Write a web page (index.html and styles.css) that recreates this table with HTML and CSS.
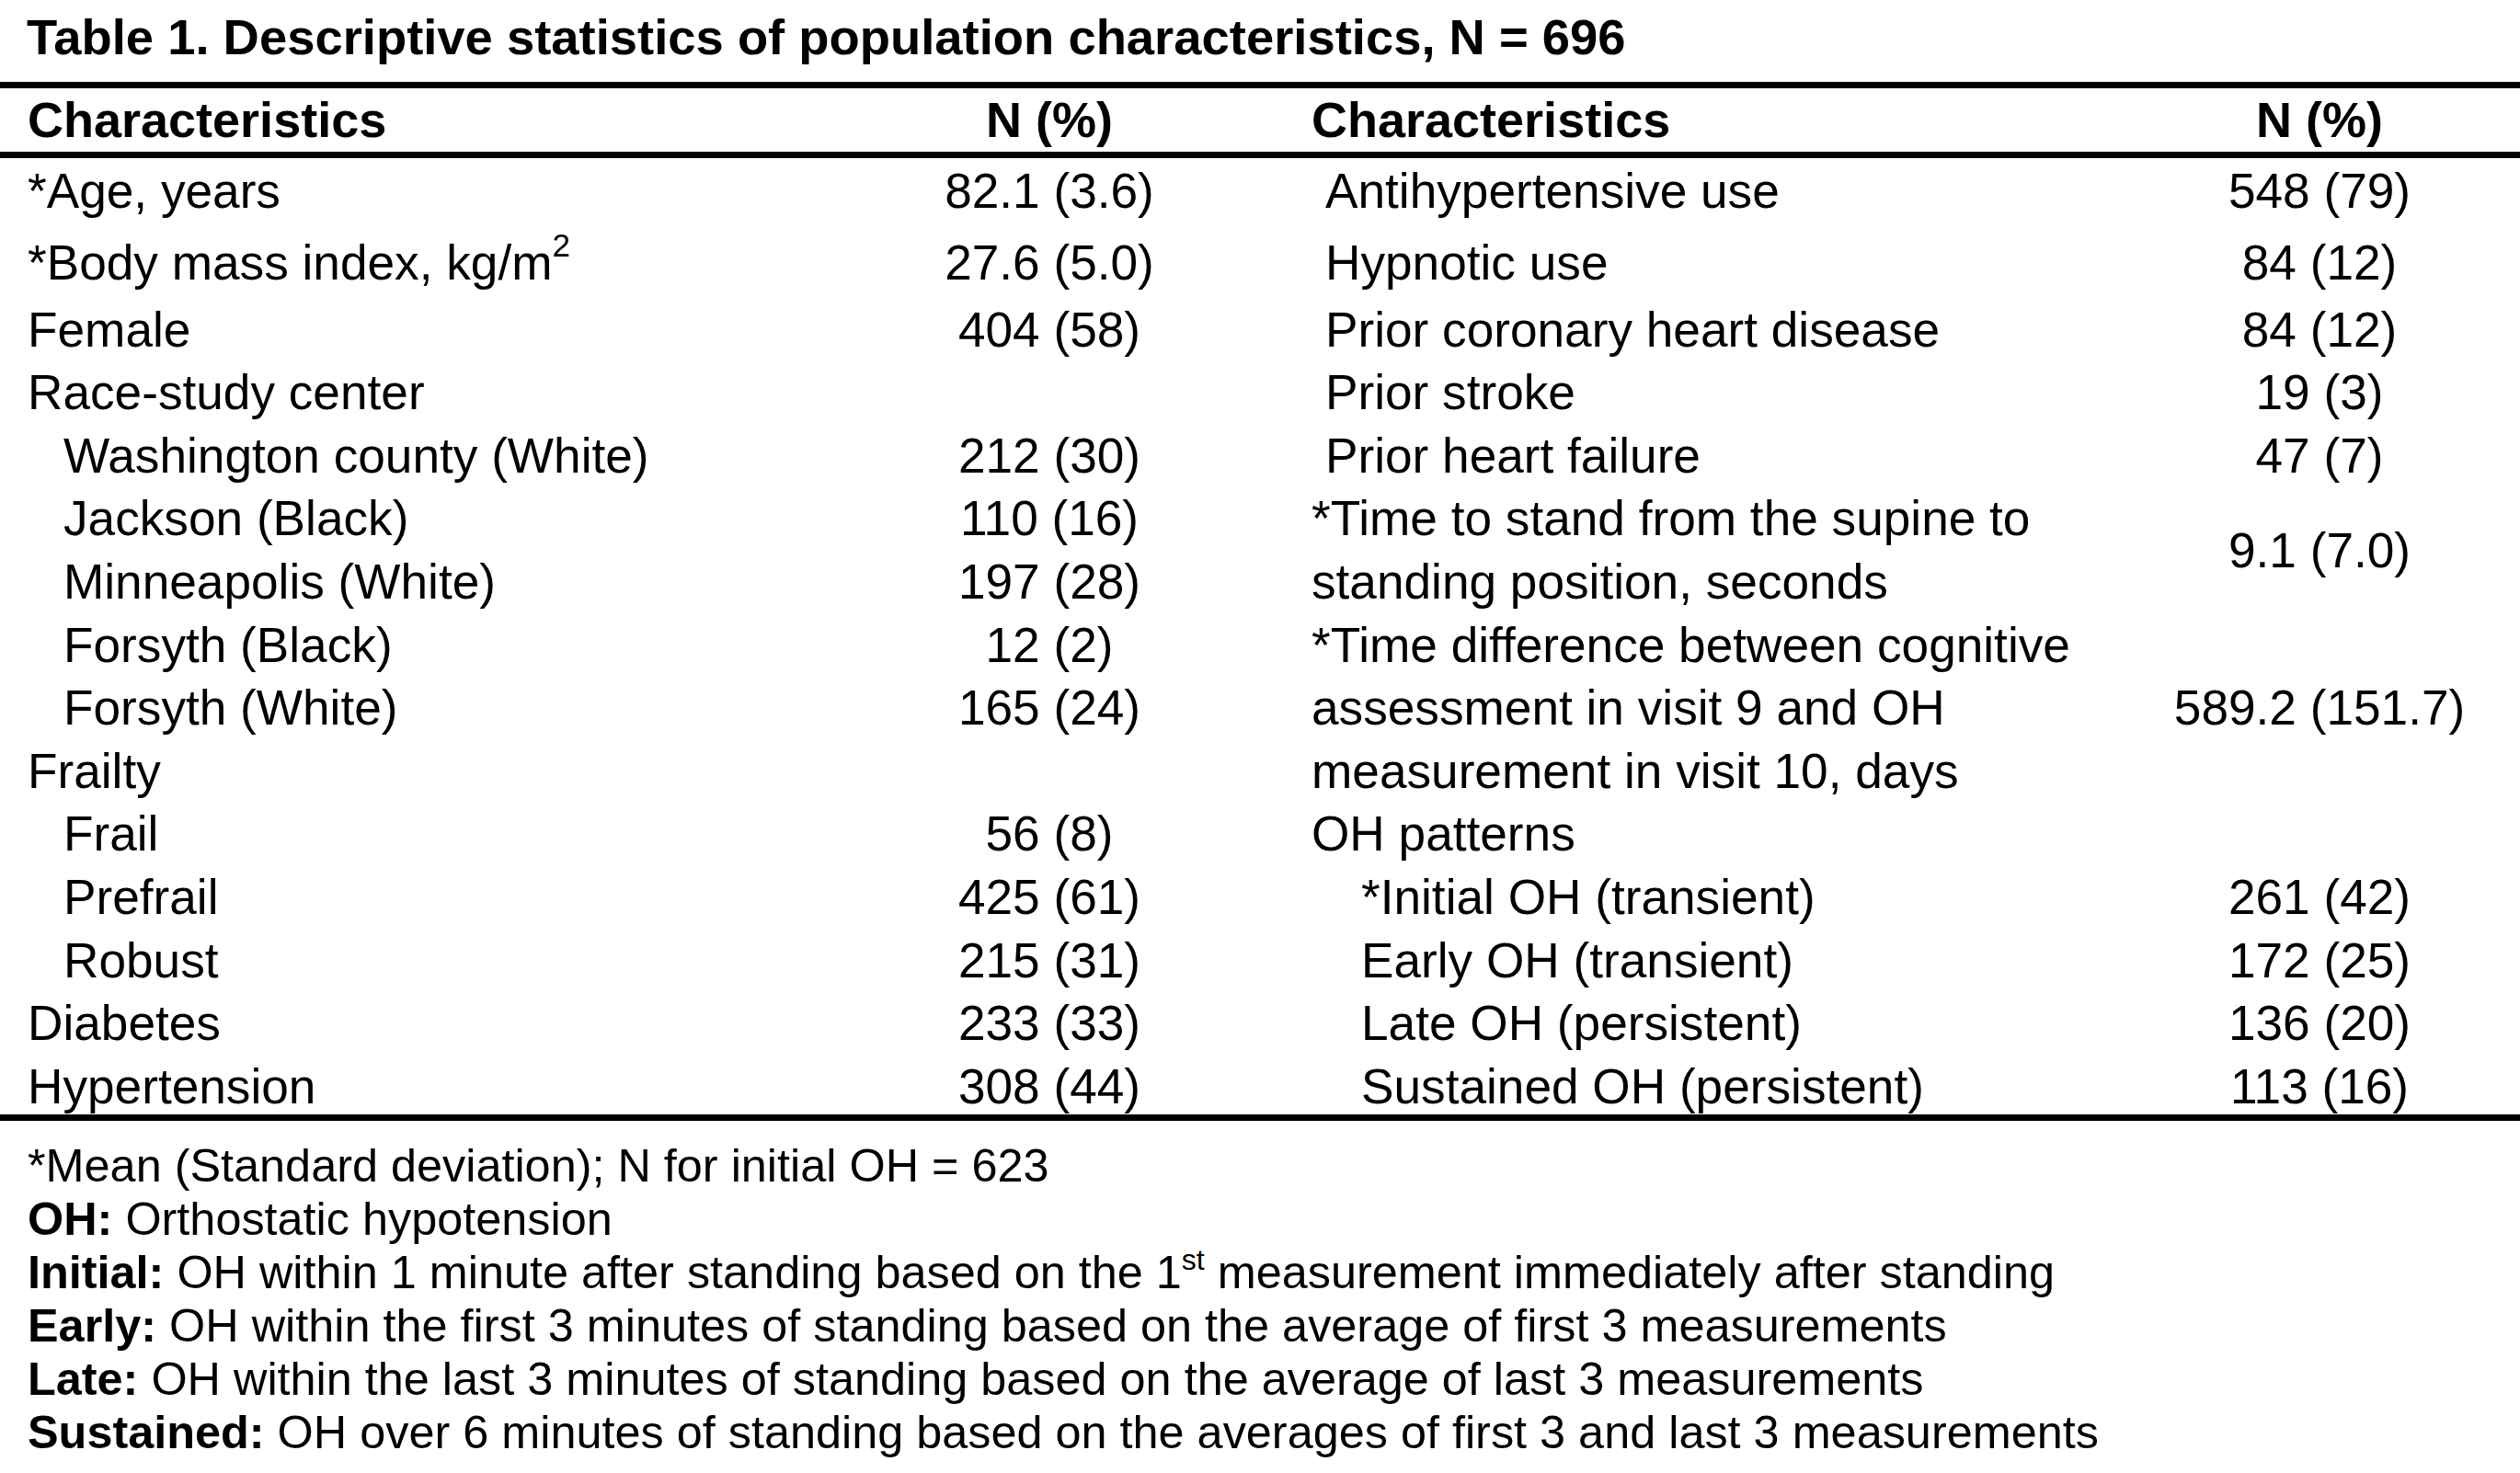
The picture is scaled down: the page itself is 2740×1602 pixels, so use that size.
FILE: index.html
```html
<!DOCTYPE html>
<html lang="en">
<head>
<meta charset="utf-8">
<title>Table 1</title>
<link rel="stylesheet" href="styles.css">
</head>
<body>
<div class="title">Table 1. Descriptive statistics of population characteristics, N = 696</div>
<table class="stats">
  <colgroup>
    <col class="w1"><col class="w2"><col class="w3"><col class="w4">
  </colgroup>
  <thead>
    <tr>
      <th class="c1">Characteristics</th>
      <th class="num">N (%)</th>
      <th class="c3">Characteristics</th>
      <th class="num">N (%)</th>
    </tr>
  </thead>
  <tbody>
    <tr class="first">
      <td class="c1">*Age, years</td><td class="num">82.1 (3.6)</td>
      <td class="c3i">Antihypertensive use</td><td class="num">548 (79)</td>
    </tr>
    <tr class="tall">
      <td class="c1">*Body mass index, kg/m<span class="sup2">2</span></td><td class="num">27.6 (5.0)</td>
      <td class="c3i">Hypnotic use</td><td class="num">84 (12)</td>
    </tr>
    <tr>
      <td class="c1">Female</td><td class="num">404 (58)</td>
      <td class="c3i">Prior coronary heart disease</td><td class="num">84 (12)</td>
    </tr>
    <tr>
      <td class="c1">Race-study center</td><td class="num"></td>
      <td class="c3i">Prior stroke</td><td class="num">19 (3)</td>
    </tr>
    <tr>
      <td class="sub">Washington county (White)</td><td class="num">212 (30)</td>
      <td class="c3i">Prior heart failure</td><td class="num">47 (7)</td>
    </tr>
    <tr>
      <td class="sub">Jackson (Black)</td><td class="num">110 (16)</td>
      <td class="c3" rowspan="2">*Time to stand from the supine to<br>standing position, seconds</td>
      <td class="num" rowspan="2">9.1 (7.0)</td>
    </tr>
    <tr>
      <td class="sub">Minneapolis (White)</td><td class="num">197 (28)</td>
    </tr>
    <tr>
      <td class="sub">Forsyth (Black)</td><td class="num">12 (2)</td>
      <td class="c3" rowspan="3">*Time difference between cognitive<br>assessment in visit 9 and OH<br>measurement in visit 10, days</td>
      <td class="num" rowspan="3">589.2 (151.7)</td>
    </tr>
    <tr>
      <td class="sub">Forsyth (White)</td><td class="num">165 (24)</td>
    </tr>
    <tr>
      <td class="c1">Frailty</td><td class="num"></td>
    </tr>
    <tr>
      <td class="sub">Frail</td><td class="num">56 (8)</td>
      <td class="c3">OH patterns</td><td class="num"></td>
    </tr>
    <tr>
      <td class="sub">Prefrail</td><td class="num">425 (61)</td>
      <td class="c3s">*Initial OH (transient)</td><td class="num">261 (42)</td>
    </tr>
    <tr>
      <td class="sub">Robust</td><td class="num">215 (31)</td>
      <td class="c3s">Early OH (transient)</td><td class="num">172 (25)</td>
    </tr>
    <tr>
      <td class="c1">Diabetes</td><td class="num">233 (33)</td>
      <td class="c3s">Late OH (persistent)</td><td class="num">136 (20)</td>
    </tr>
    <tr class="last">
      <td class="c1">Hypertension</td><td class="num">308 (44)</td>
      <td class="c3s">Sustained OH (persistent)</td><td class="num">113 (16)</td>
    </tr>
  </tbody>
</table>
<div class="notes">
  <div>*Mean (Standard deviation); N for initial OH = 623</div>
  <div><b>OH:</b> Orthostatic hypotension</div>
  <div><b>Initial:</b> OH within 1 minute after standing based on the 1<span class="sup-st">st</span> measurement immediately after standing</div>
  <div><b>Early:</b> OH within the first 3 minutes of standing based on the average of first 3 measurements</div>
  <div><b>Late:</b> OH within the last 3 minutes of standing based on the average of last 3 measurements</div>
  <div><b>Sustained:</b> OH over 6 minutes of standing based on the averages of first 3 and last 3 measurements</div>
</div>
</body>
</html>
```
FILE: styles.css
```css
html, body {
  margin: 0;
  padding: 0;
  background: #ffffff;
  color: #000000;
  font-family: "Liberation Sans", Arial, sans-serif;
}

.title {
  font-weight: bold;
  font-size: 54.4px;
  line-height: 69px;
  padding: 6px 0 0 29px;
  margin-bottom: 14px;
  white-space: nowrap;
}

.stats {
  width: 2740px;
  table-layout: fixed;
  border-collapse: separate;
  border-spacing: 0;
  font-size: 53.2px;
  line-height: 68.6px;
}

.w1 { width: 862px; }
.w2 { width: 558px; }
.w3 { width: 884px; }
.w4 { width: 436px; }

.stats th {
  font-weight: bold;
  font-size: 54px;
  line-height: 69px;
  padding: 0;
  text-align: left;
  border-top: 7px solid #000;
  border-bottom: 7px solid #000;
  white-space: nowrap;
}

.stats td {
  padding: 0;
  vertical-align: top;
  white-space: nowrap;
}

.stats .num {
  text-align: center;
  vertical-align: middle;
}

.stats .c1 { padding-left: 30px; }
.stats .sub { padding-left: 69px; }
.stats .c3 { padding-left: 6px; }
.stats .c3i { padding-left: 21px; }
.stats .c3s { padding-left: 60px; }

.stats .first td {
  padding-top: 1.5px;
  line-height: 67.1px;
}

.stats .tall td {
  padding-top: 11.4px;
  padding-bottom: 4px;
}

.stats .last td {
  padding-top: 4px;
  line-height: 60.6px;
  border-bottom: 7px solid #000;
}

.sup2 {
  font-size: 35px;
  line-height: 0;
  vertical-align: 25px;
}

.notes {
  margin-top: 20px;
  padding-left: 30px;
  font-size: 50.4px;
  line-height: 58px;
  white-space: nowrap;
}

.sup-st {
  font-size: 32px;
  line-height: 0;
  vertical-align: 20px;
}
```
